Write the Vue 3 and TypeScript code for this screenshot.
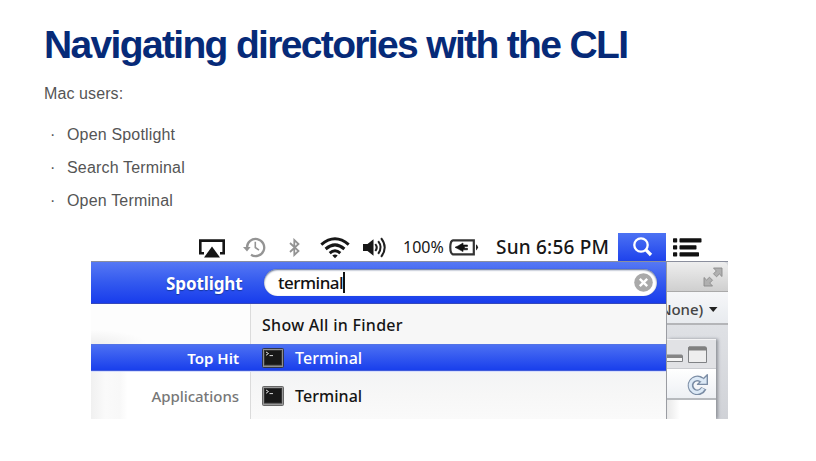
<script setup lang="ts">
const steps: string[] = ['Open Spotlight', 'Search Terminal', 'Open Terminal']
const query = 'terminal'
</script>

<template>
  <main class="slide">
    <h1>Navigating directories with the CLI</h1>
    <p class="intro">Mac users:</p>
    <ul class="steps">
      <li v-for="step in steps" :key="step"><span class="dot">·</span><span>{{ step }}</span></li>
    </ul>

    <section class="shot">
      <header class="menubar">
        <svg class="airplay" width="26" height="19" viewBox="0 0 26 19">
          <path d="M5 14.2H1.3V1.6H24.7V14.2H21" fill="none" stroke="#151515" stroke-width="2.6" />
          <path d="M13 7.5L21 18.5H5Z" fill="#151515" />
        </svg>
        <svg class="history" width="23" height="21" viewBox="0 0 23 21" fill="none" stroke="#949494">
          <path d="M4 10.5A8.6 8.6 0 1 1 8 17.8" stroke-width="2.3" />
          <path d="M0 10H7.6L4 14.5Z" fill="#949494" stroke="none" />
          <path d="M12.3 4.8V10.5L16 13.2" stroke-width="1.6" />
        </svg>
        <svg class="bluetooth" width="11" height="19" viewBox="0 0 11 19">
          <path d="M1 5L9.5 13L5.3 17V2L9.5 6L1 14" fill="none" stroke="#939393" stroke-width="1.8" />
        </svg>
        <svg class="wifi" width="30" height="22" viewBox="0 0 30 22" fill="none" stroke="#171717" stroke-width="3">
          <path d="M1.3 7.6Q15-4.2 28.7 7.6" />
          <path d="M5.6 12Q15 3.8 24.4 12" />
          <path d="M9.7 16.1Q15 11.5 20.3 16.1" />
          <path d="M12.3 18.6Q15 16.2 17.7 18.6L15 21.3Z" fill="#171717" stroke="none" />
        </svg>
        <svg class="sound" width="24" height="21" viewBox="0 0 24 21" fill="none" stroke="#202020" stroke-width="2">
          <path d="M0 7H4.5L10.5 2.3V18.7L4.5 14H0Z" fill="#171717" stroke="none" />
          <path d="M12.3 7Q15.1 10.5 12.3 14" />
          <path d="M15.2 4.2Q20 10.5 15.2 16.8" />
          <path d="M18.1 1.2Q25.3 10.5 18.1 19.8" />
        </svg>
        <span class="percent">100%</span>
        <svg class="battery" width="30" height="17" viewBox="0 0 30 17">
          <path d="M4 1.3H24.8V15.3H4Q1.3 14.8 1.3 8.3T4 1.3Z" fill="none" stroke="#333" stroke-width="2.2" />
          <path d="M27 5.2Q31 8.3 27 11.4Z" fill="#222" />
          <path d="M6 8.3L9 7L14 4V6H18.5V7.4H15.5V9.3H18.5V10.8H14V12.6L9 9.8Z" fill="#111" stroke="#111" stroke-width=".6" />
        </svg>
        <span class="clock">Sun 6:56 PM</span>
        <span class="search-button">
          <svg width="21" height="20" viewBox="0 0 21 20" fill="none" stroke="#fff">
            <circle cx="8" cy="8" r="6.7" stroke-width="2.3" />
            <path d="M12.7 12.7L18 18" stroke-width="3.3" />
          </svg>
        </span>
        <svg class="list-icon" width="29" height="19" viewBox="0 0 29 19" fill="#111">
          <rect width="4.2" height="4.2" rx=".7" y=".2" /><rect x="6.5" y=".2" width="22" height="4.2" rx=".7" />
          <rect y="7.3" width="4.2" height="4.2" rx=".7" /><rect x="6.5" y="7.3" width="17" height="4.2" rx=".7" />
          <rect y="14.2" width="4.2" height="4.2" rx=".7" /><rect x="6.5" y="14.2" width="19.5" height="4.2" rx=".7" />
        </svg>
      </header>

      <div class="body">
        <div class="spotlight">
          <div class="search-row">
            <strong>Spotlight</strong>
            <div class="field">
              <span class="query">{{ query }}</span><i class="cursor"></i>
              <svg class="clear" width="19" height="19" viewBox="0 0 19 19">
                <circle cx="9.5" cy="9.5" r="9.3" fill="#a9a9a9" />
                <path d="M5.8 5.8L13.2 13.2M13.2 5.8L5.8 13.2" stroke="#fff" stroke-width="2.4" />
              </svg>
            </div>
          </div>
          <div class="result all">
            <div class="category"></div>
            <div class="entry"><span class="show-all">Show All in Finder</span></div>
          </div>
          <div class="result selected">
            <div class="category"><span class="top-hit">Top Hit</span></div>
            <div class="entry">
              <svg class="terminal" width="22" height="20" viewBox="0 0 22 20">
                <rect x=".5" y=".5" width="21" height="19" rx="1" fill="#8f8f8f" stroke="#303447" />
                <rect x="2.5" y="2.5" width="17" height="14.5" fill="#181818" stroke="#333" />
                <path d="M4 4L6.5 5.5L4 7.3M7.5 7.6H11" fill="none" stroke="#ddd" />
              </svg>
              <span class="name">Terminal</span>
            </div>
          </div>
          <div class="result apps">
            <div class="category"><span class="applications">Applications</span></div>
            <div class="entry">
              <svg class="terminal" width="22" height="20" viewBox="0 0 22 20">
                <rect x=".5" y=".5" width="21" height="19" rx="1" fill="#999" stroke="#666" />
                <rect x="2.5" y="2.5" width="17" height="14.5" fill="#181818" stroke="#333" />
                <path d="M4 4L6.5 5.5L4 7.3M7.5 7.6H11" fill="none" stroke="#ddd" />
              </svg>
              <span class="name">Terminal</span>
            </div>
          </div>
        </div>

        <aside class="window">
          <div class="titlebar">
            <svg width="20" height="20" viewBox="0 0 20 20" fill="#b0b0b0" stroke="#8b8b8b" stroke-width=".9">
              <path d="M10.5 1H19V9.5L16.4 7L13.5 9.8L10.5 6.8L13.3 4Z" />
              <path d="M1 10.5L3.6 13L6.5 10.2L9.5 13.2L6.7 16L9.5 19H1Z" />
            </svg>
          </div>
          <div class="project">
            <span>None)</span>
            <svg width="9" height="5" viewBox="0 0 9 5"><path d="M0 0H8.5L4.2 5Z" fill="#222" /></svg>
          </div>
          <div class="desk">
            <div class="pane">
              <div class="pane-head">
                <svg width="52" height="18" viewBox="0 0 52 18" stroke="#808285" fill="#f4f4f4">
                  <path d="M-2 9H14.5Q15.5 9 15.5 10V15.5H-2Z" />
                  <path d="M-2 9H15V12H-2Z" fill="#858585" stroke="none" />
                  <path d="M22 1H38L39.5 2.5V16.5H21.5V1.5Z" fill="#eee" />
                  <path d="M22 .5H39L40 2V4.5H21V2Z" fill="#808080" stroke="none" />
                </svg>
              </div>
              <div class="pane-tools">
                <svg width="21" height="21" viewBox="0 0 21 21" fill="none">
                  <path d="M14.8 6A6.9 6.9 0 1 0 16.8 14.3" stroke="#7b8da5" stroke-width="5.8" />
                  <path d="M10.5 10.4H20.3V.8Z" fill="#dce9f6" stroke="#7b8da5" stroke-width="1.4" stroke-linejoin="round" />
                  <path d="M16.3 6.6L14.2 5.8A6.9 6.9 0 1 0 16.2 14.6" stroke="#dce9f6" stroke-width="3.2" />
                </svg>
              </div>
              <div class="pane-content"></div>
            </div>
          </div>
        </aside>
      </div>
    </section>
  </main>
</template>

<style>
body { margin: 0; background: #fff; }
</style>

<style scoped>
* { box-sizing: border-box; }
.slide { width: 816px; height: 461px; overflow: hidden; padding: 21px 0 0 44px; background: #fff; font-family: "Liberation Sans", sans-serif; }
h1 { margin: 0; height: 48px; font-size: 39px; line-height: 48px; letter-spacing: -1.66px; color: #062a78; white-space: nowrap; }
.intro { margin: 15px 0 0; font-size: 16px; line-height: 20px; letter-spacing: .1px; color: #555; }
.steps { list-style: none; margin: 14px 0 0; padding: 0; height: 115px; color: #555; font-size: 16px; letter-spacing: .17px; }
.steps li { display: flex; height: 33px; line-height: 33px; }
.dot { width: 23px; padding-left: 6px; }
.shot { width: 637px; height: 186px; margin-left: 47px; overflow: hidden; font-family: "Noto Sans", sans-serif; }
.menubar { display: flex; align-items: flex-start; height: 28px; color: #171717; white-space: nowrap; }
.menubar > * { flex: none; }
.airplay { margin: 6px 0 0 108px; }
.history { margin: 4px 0 0 18px; }
.bluetooth { margin: 5px 0 0 23px; }
.wifi { margin: 4px 0 0 20px; }
.sound { margin: 4px 0 0 13px; }
.percent { margin-left: 16px; width: 47px; line-height: 28px; font-size: 16px; }
.battery { margin-top: 6px; margin-left: -1px; }
.clock { width: 122px; margin-left: 17px; line-height: 28px; font-size: 19px; font-weight: 500; letter-spacing: .2px; }
.search-button { display: flex; width: 48px; height: 28px; padding: 4px 0 0 15px; background: linear-gradient(#4c72f3, #1e42ec); }
.list-icon { margin: 5px 0 0 7px; }
.body { display: flex; height: 158px; border-top: 1px solid #8b8f9d; }
.spotlight { width: 576px; flex: none; border-right: 1px solid #9b9da3; background: #f7f7f7; }
.search-row { display: flex; align-items: flex-start; height: 42px; background: linear-gradient(#5678f4, #3359ef 50%, #183cec); border-bottom: 1px solid #3548ba; padding: 7px 9px 0 0; color: #fff; }
.search-row strong { width: 173px; padding-left: 75px; line-height: 29px; font-size: 17px; letter-spacing: -.1px; text-shadow: 0 1px 1px #1636a0; }
.field { display: flex; align-items: center; flex: 1; height: 27px; padding: 0 4px 0 14px; border-radius: 14px; background: white; color: #111; box-shadow: inset 0 1px 2px #53658b, 0 0 1px #183cc5; }
.query { font-size: 17px; line-height: 24px; letter-spacing: -.5px; font-weight: 500; }
.cursor { width: 1.5px; height: 21px; background: #111; }
.clear { margin-left: auto; }
.result { display: flex; }
.category { display: flex; align-items: center; justify-content: flex-end; width: 160px; padding-right: 11px; background: #fdfdfd; border-right: 1px solid #dbdbdb; }
.entry { display: flex; align-items: center; flex: 1; padding-left: 11px; color: #151515; }
.all { height: 40px; }
.all .entry { padding-top: 2px; }
.all .category { background: radial-gradient(ellipse at 0 100%, #eee, #fdfdfd 25%); }
.selected { height: 27px; background: linear-gradient(#4c70f3, #193fec); border-top: 1px solid #5373e6; border-bottom: 1px solid #405bdb; }
.selected .category { background: transparent; border-color: transparent; color: #fff; }
.selected .entry { color: #fff; }
.apps { height: 48px; border-top: 1px solid #d7defd; }
.apps .category { padding-top: 1px; background: linear-gradient(90deg, #f0f0f0, #fafafa 9%, #f8f8f8 18%, #fff 23%); color: #777; }
.apps .entry { padding-top: 1px; background: linear-gradient(#f3f4f5, #f7f7f7 50%, #fafafa); }
.show-all { font-size: 16px; font-weight: 500; letter-spacing: .28px; }
.top-hit { font-size: 15px; font-weight: 600; }
.applications { font-size: 15px; font-weight: 500; letter-spacing: -.05px; }
.name { margin-left: 11px; font-size: 16px; font-weight: 500; letter-spacing: .05px; }
.terminal { flex: none; }
.window { width: 61px; flex: none; background: #d5d7db; }
.titlebar { height: 30px; border-bottom: 1px solid #aaa; border-top-right-radius: 5px; background: linear-gradient(#eee, #cfcfcf); padding: 5px 5px 0 0; display: flex; justify-content: flex-end; }
.project { display: flex; align-items: center; height: 33px; padding-top: 3px; background: linear-gradient(#f6f7f9, #e8ebef); border-bottom: 2px solid #b4b5b8; overflow: hidden; }
.project span { flex: none; margin-left: -7px; width: 49px; font-size: 15px; line-height: 28px; letter-spacing: -.1px; font-weight: 500; color: #444; }
.desk { height: 94px; padding: 14px 12px 0 0; background: linear-gradient(#dfe1e5, #d0d2d7); }
.pane { height: 80px; border-top: 1px solid #f4f4f5; box-shadow: 2px 0 3px #8f9299; }
.pane-head { height: 29px; background: #e1e2e5; padding: 6px 0 0; border-bottom: 1px solid #c9cbcf; }
.pane-tools { height: 31px; padding: 5px 8px 0 0; display: flex; justify-content: flex-end; background: linear-gradient(#fff, #edf0f4); border-bottom: 2px solid #b7babe; }
.pane-content { height: 20px; background: linear-gradient(90deg, #e9e9e9, #fff 13px); }
</style>
